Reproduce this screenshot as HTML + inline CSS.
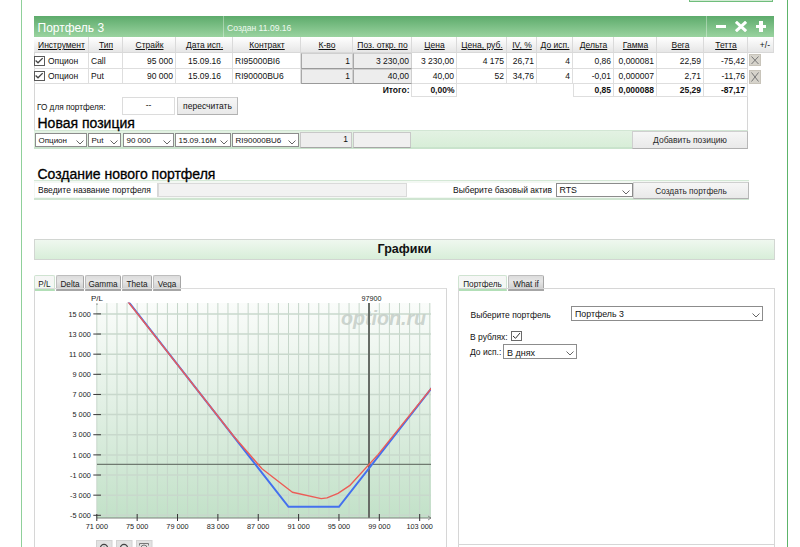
<!DOCTYPE html><html><head><meta charset="utf-8"><style>
*{box-sizing:border-box}
html,body{margin:0;padding:0;width:800px;height:547px;overflow:hidden;background:#fff;font-family:"Liberation Sans",sans-serif;color:#111}
.abs{position:absolute}
.t{position:absolute;white-space:pre;font-size:8.5px;line-height:15px}
.hd{background:linear-gradient(#ffffff,#e6e6e6)}
.u{text-decoration:underline}
.sel{position:absolute;background:#fff;border:1px solid #8c8c8c;font-size:8px;line-height:11px;padding-left:3px;white-space:pre}
.chev{position:absolute;right:3px;top:5px;width:8px;height:5px}
.btn{position:absolute;background:linear-gradient(#f6f6f6,#e9e9e9);border:1px solid #cfcfcf;border-bottom-color:#b0b0b0;border-right-color:#b8b8b8;font-size:9px;text-align:center;white-space:pre}
.tab{position:absolute;top:275px;height:16px;background:linear-gradient(#dcdcdc,#e6e6e6 40%,#cfcfcf);border:1px solid #bdbdbd;border-right-color:#a6a6a6;border-bottom:2px solid #a6a6a6;border-radius:2px 2px 0 0;font-size:8.2px;line-height:17.5px;text-align:center;color:#1a1a1a}
.tab.act{background:linear-gradient(#f6f6f6,#f2f8f2);border-color:#cfe3d1;border-bottom:2px solid #b2dfb7}
</style></head><body>

<div class="abs" style="left:21px;top:0;width:1px;height:547px;background:#8fd09a"></div>
<div class="abs" style="left:787px;top:0;width:1px;height:547px;background:#5db46a"></div>
<div class="abs" style="left:689px;top:-10px;width:84px;height:12px;border:1px solid #6fbd7b;background:#d3ebd5"></div>
<div class="abs" style="left:34px;top:16px;width:740px;height:21px;background:linear-gradient(#5dab6b,#9ad3a0)"></div>
<div class="abs" style="left:223px;top:16px;width:1px;height:21px;background:rgba(255,255,255,.35)"></div>
<div class="abs" style="left:706px;top:16px;width:1px;height:21px;background:rgba(255,255,255,.35)"></div>
<div class="t" style="left:37.5px;top:20px;font-size:12px;line-height:16px;color:#ffffff">Портфель 3</div>
<div class="t" style="left:227px;top:20.75px;font-size:8.6px;line-height:14px;color:#eefaf0">Создан 11.09.16</div>
<div class="abs" style="left:715.5px;top:24.5px;width:10.5px;height:3.5px;background:#fff"></div>
<svg class="abs" style="left:735px;top:21px" width="12" height="11"><path d="M2 1.8 L10 9.2 M10 1.8 L2 9.2" stroke="#fff" stroke-width="3" stroke-linecap="square"/></svg>
<div class="abs" style="left:755.5px;top:24.5px;width:10.5px;height:3.5px;background:#fff"></div>
<div class="abs" style="left:759px;top:21px;width:3.5px;height:10.5px;background:#fff"></div>
<div class="abs" style="left:34px;top:37px;width:714px;height:112px;border-left:1px solid #d6d6d6;border-right:1px solid #d6d6d6"></div>
<div class="abs hd" style="left:34px;top:37px;width:55px;height:16px;border-right:1px solid #dadada;border-bottom:1px solid #d8d8d8"></div>
<div class="t u" style="left:34px;top:38px;width:55px;text-align:center">Инструмент</div>
<div class="abs hd" style="left:89px;top:37px;width:34px;height:16px;border-right:1px solid #dadada;border-bottom:1px solid #d8d8d8"></div>
<div class="t u" style="left:89px;top:38px;width:34px;text-align:center">Тип</div>
<div class="abs hd" style="left:123px;top:37px;width:53px;height:16px;border-right:1px solid #dadada;border-bottom:1px solid #d8d8d8"></div>
<div class="t u" style="left:123px;top:38px;width:53px;text-align:center">Страйк</div>
<div class="abs hd" style="left:176px;top:37px;width:57px;height:16px;border-right:1px solid #dadada;border-bottom:1px solid #d8d8d8"></div>
<div class="t u" style="left:176px;top:38px;width:57px;text-align:center">Дата исп.</div>
<div class="abs hd" style="left:233px;top:37px;width:68px;height:16px;border-right:1px solid #dadada;border-bottom:1px solid #d8d8d8"></div>
<div class="t u" style="left:233px;top:38px;width:68px;text-align:center">Контракт</div>
<div class="abs hd" style="left:301px;top:37px;width:52px;height:16px;border-right:1px solid #dadada;border-bottom:1px solid #d8d8d8"></div>
<div class="t u" style="left:301px;top:38px;width:52px;text-align:center">К-во</div>
<div class="abs hd" style="left:353px;top:37px;width:59px;height:16px;border-right:1px solid #dadada;border-bottom:1px solid #d8d8d8"></div>
<div class="t u" style="left:353px;top:38px;width:59px;text-align:center">Поз. откр. по</div>
<div class="abs hd" style="left:412px;top:37px;width:45px;height:16px;border-right:1px solid #dadada;border-bottom:1px solid #d8d8d8"></div>
<div class="t u" style="left:412px;top:38px;width:45px;text-align:center">Цена</div>
<div class="abs hd" style="left:457px;top:37px;width:50px;height:16px;border-right:1px solid #dadada;border-bottom:1px solid #d8d8d8"></div>
<div class="t u" style="left:457px;top:38px;width:50px;text-align:center">Цена, руб.</div>
<div class="abs hd" style="left:507px;top:37px;width:30px;height:16px;border-right:1px solid #dadada;border-bottom:1px solid #d8d8d8"></div>
<div class="t u" style="left:507px;top:38px;width:30px;text-align:center">IV, %</div>
<div class="abs hd" style="left:537px;top:37px;width:36px;height:16px;border-right:1px solid #dadada;border-bottom:1px solid #d8d8d8"></div>
<div class="t u" style="left:537px;top:38px;width:36px;text-align:center">До исп.</div>
<div class="abs hd" style="left:573px;top:37px;width:41px;height:16px;border-right:1px solid #dadada;border-bottom:1px solid #d8d8d8"></div>
<div class="t u" style="left:573px;top:38px;width:41px;text-align:center">Дельта</div>
<div class="abs hd" style="left:614px;top:37px;width:43px;height:16px;border-right:1px solid #dadada;border-bottom:1px solid #d8d8d8"></div>
<div class="t u" style="left:614px;top:38px;width:43px;text-align:center">Гамма</div>
<div class="abs hd" style="left:657px;top:37px;width:47px;height:16px;border-right:1px solid #dadada;border-bottom:1px solid #d8d8d8"></div>
<div class="t u" style="left:657px;top:38px;width:47px;text-align:center">Вега</div>
<div class="abs hd" style="left:704px;top:37px;width:44px;height:16px;border-right:1px solid #dadada;border-bottom:1px solid #d8d8d8"></div>
<div class="t u" style="left:704px;top:38px;width:44px;text-align:center">Тетта</div>
<div class="abs hd" style="left:748px;top:37px;width:26px;height:16px;border-right:1px solid #dadada;border-bottom:1px solid #d8d8d8"></div>
<div class="t" style="left:748px;top:38px;width:22px;text-align:right">+/-</div>
<div class="abs" style="left:34px;top:53px;width:55px;height:16px;border-right:1px solid #dedede;border-bottom:1px solid #dedede"></div>
<div class="abs" style="left:34.3px;top:56px;width:10.3px;height:9.6px;border:1px solid #5a5a5a;background:#fff"></div>
<svg class="abs" style="left:34.3px;top:56px" width="11" height="10"><path d="M1.6 4.6 L4 6.8 L8.7 2.1" fill="none" stroke="#444" stroke-width="1.3"/></svg>
<div class="t" style="left:48px;top:54px">Опцион</div>
<div class="abs" style="left:89px;top:53px;width:34px;height:16px;border-right:1px solid #dedede;border-bottom:1px solid #dedede"></div>
<div class="t" style="left:91px;top:54px">Call</div>
<div class="abs" style="left:123px;top:53px;width:53px;height:16px;border-right:1px solid #dedede;border-bottom:1px solid #dedede"></div>
<div class="t" style="left:123px;top:54px;width:50px;text-align:right">95 000</div>
<div class="abs" style="left:176px;top:53px;width:57px;height:16px;border-right:1px solid #dedede;border-bottom:1px solid #dedede"></div>
<div class="t" style="left:176px;top:54px;width:57px;text-align:center">15.09.16</div>
<div class="abs" style="left:233px;top:53px;width:68px;height:16px;border-right:1px solid #dedede;border-bottom:1px solid #dedede"></div>
<div class="t" style="left:235px;top:54px">RI95000BI6</div>
<div class="abs" style="left:301px;top:53px;width:52px;height:16px;background:#ededed;border:1px solid #cfcfcf;border-bottom-color:#9a9a9a;border-left-color:#a8a8a8"></div>
<div class="t" style="left:301px;top:54px;width:49px;text-align:right">1</div>
<div class="abs" style="left:353px;top:53px;width:59px;height:16px;background:#ededed;border:1px solid #cfcfcf;border-bottom-color:#9a9a9a;border-left-color:#a8a8a8"></div>
<div class="t" style="left:353px;top:54px;width:56px;text-align:right">3 230,00</div>
<div class="abs" style="left:412px;top:53px;width:45px;height:16px;border-right:1px solid #dedede;border-bottom:1px solid #dedede"></div>
<div class="t" style="left:412px;top:54px;width:42px;text-align:right">3 230,00</div>
<div class="abs" style="left:457px;top:53px;width:50px;height:16px;border-right:1px solid #dedede;border-bottom:1px solid #dedede"></div>
<div class="t" style="left:457px;top:54px;width:47px;text-align:right">4 175</div>
<div class="abs" style="left:507px;top:53px;width:30px;height:16px;border-right:1px solid #dedede;border-bottom:1px solid #dedede"></div>
<div class="t" style="left:507px;top:54px;width:27px;text-align:right">26,71</div>
<div class="abs" style="left:537px;top:53px;width:36px;height:16px;border-right:1px solid #dedede;border-bottom:1px solid #dedede"></div>
<div class="t" style="left:537px;top:54px;width:33px;text-align:right">4</div>
<div class="abs" style="left:573px;top:53px;width:41px;height:16px;border-right:1px solid #dedede;border-bottom:1px solid #dedede"></div>
<div class="t" style="left:573px;top:54px;width:38px;text-align:right">0,86</div>
<div class="abs" style="left:614px;top:53px;width:43px;height:16px;border-right:1px solid #dedede;border-bottom:1px solid #dedede"></div>
<div class="t" style="left:614px;top:54px;width:40px;text-align:right">0,000081</div>
<div class="abs" style="left:657px;top:53px;width:47px;height:16px;border-right:1px solid #dedede;border-bottom:1px solid #dedede"></div>
<div class="t" style="left:657px;top:54px;width:44px;text-align:right">22,59</div>
<div class="abs" style="left:704px;top:53px;width:44px;height:16px;border-right:1px solid #dedede;border-bottom:1px solid #dedede"></div>
<div class="t" style="left:704px;top:54px;width:41px;text-align:right">-75,42</div>
<div class="abs" style="left:748.5px;top:53.5px;width:12px;height:12.5px;background:#d6d3cb;border:1px solid #c8c4ba"></div>
<svg class="abs" style="left:748.5px;top:53.5px" width="12" height="12.5"><path d="M2.5 2.5 L9.5 10.0 M9.5 2.5 L2.5 10.0" stroke="#777" stroke-width="1"/></svg>
<div class="abs" style="left:34px;top:69px;width:55px;height:15px;border-right:1px solid #dedede;border-bottom:1px solid #dedede"></div>
<div class="abs" style="left:34.3px;top:71px;width:10.3px;height:9.6px;border:1px solid #5a5a5a;background:#fff"></div>
<svg class="abs" style="left:34.3px;top:71px" width="11" height="10"><path d="M1.6 4.6 L4 6.8 L8.7 2.1" fill="none" stroke="#444" stroke-width="1.3"/></svg>
<div class="t" style="left:48px;top:69px">Опцион</div>
<div class="abs" style="left:89px;top:69px;width:34px;height:15px;border-right:1px solid #dedede;border-bottom:1px solid #dedede"></div>
<div class="t" style="left:91px;top:69px">Put</div>
<div class="abs" style="left:123px;top:69px;width:53px;height:15px;border-right:1px solid #dedede;border-bottom:1px solid #dedede"></div>
<div class="t" style="left:123px;top:69px;width:50px;text-align:right">90 000</div>
<div class="abs" style="left:176px;top:69px;width:57px;height:15px;border-right:1px solid #dedede;border-bottom:1px solid #dedede"></div>
<div class="t" style="left:176px;top:69px;width:57px;text-align:center">15.09.16</div>
<div class="abs" style="left:233px;top:69px;width:68px;height:15px;border-right:1px solid #dedede;border-bottom:1px solid #dedede"></div>
<div class="t" style="left:235px;top:69px">RI90000BU6</div>
<div class="abs" style="left:301px;top:69px;width:52px;height:15px;background:#ededed;border:1px solid #cfcfcf;border-bottom-color:#9a9a9a;border-left-color:#a8a8a8"></div>
<div class="t" style="left:301px;top:69px;width:49px;text-align:right">1</div>
<div class="abs" style="left:353px;top:69px;width:59px;height:15px;background:#ededed;border:1px solid #cfcfcf;border-bottom-color:#9a9a9a;border-left-color:#a8a8a8"></div>
<div class="t" style="left:353px;top:69px;width:56px;text-align:right">40,00</div>
<div class="abs" style="left:412px;top:69px;width:45px;height:15px;border-right:1px solid #dedede;border-bottom:1px solid #dedede"></div>
<div class="t" style="left:412px;top:69px;width:42px;text-align:right">40,00</div>
<div class="abs" style="left:457px;top:69px;width:50px;height:15px;border-right:1px solid #dedede;border-bottom:1px solid #dedede"></div>
<div class="t" style="left:457px;top:69px;width:47px;text-align:right">52</div>
<div class="abs" style="left:507px;top:69px;width:30px;height:15px;border-right:1px solid #dedede;border-bottom:1px solid #dedede"></div>
<div class="t" style="left:507px;top:69px;width:27px;text-align:right">34,76</div>
<div class="abs" style="left:537px;top:69px;width:36px;height:15px;border-right:1px solid #dedede;border-bottom:1px solid #dedede"></div>
<div class="t" style="left:537px;top:69px;width:33px;text-align:right">4</div>
<div class="abs" style="left:573px;top:69px;width:41px;height:15px;border-right:1px solid #dedede;border-bottom:1px solid #dedede"></div>
<div class="t" style="left:573px;top:69px;width:38px;text-align:right">-0,01</div>
<div class="abs" style="left:614px;top:69px;width:43px;height:15px;border-right:1px solid #dedede;border-bottom:1px solid #dedede"></div>
<div class="t" style="left:614px;top:69px;width:40px;text-align:right">0,000007</div>
<div class="abs" style="left:657px;top:69px;width:47px;height:15px;border-right:1px solid #dedede;border-bottom:1px solid #dedede"></div>
<div class="t" style="left:657px;top:69px;width:44px;text-align:right">2,71</div>
<div class="abs" style="left:704px;top:69px;width:44px;height:15px;border-right:1px solid #dedede;border-bottom:1px solid #dedede"></div>
<div class="t" style="left:704px;top:69px;width:41px;text-align:right">-11,76</div>
<div class="abs" style="left:748.5px;top:69.5px;width:12px;height:14px;background:#d6d3cb;border:1px solid #c8c4ba"></div>
<svg class="abs" style="left:748.5px;top:69.5px" width="12" height="14"><path d="M2.5 2.5 L9.5 11.5 M9.5 2.5 L2.5 11.5" stroke="#777" stroke-width="1"/></svg>
<div class="t" style="left:353px;top:82.5px;width:56.5px;text-align:right;font-weight:bold">Итого:</div>
<div class="abs" style="left:411px;top:84px;width:46px;height:13px;border:1px solid #dedede;border-top:none"></div>
<div class="t" style="left:412px;top:82.5px;width:42.5px;text-align:right;font-weight:bold">0,00%</div>
<div class="abs" style="left:573px;top:84px;width:41px;height:13px;border-right:1px solid #dedede;border-bottom:1px solid #dedede;border-left:1px solid #dedede;"></div>
<div class="t" style="left:573px;top:82.5px;width:38px;text-align:right;font-weight:bold">0,85</div>
<div class="abs" style="left:614px;top:84px;width:43px;height:13px;border-right:1px solid #dedede;border-bottom:1px solid #dedede;"></div>
<div class="t" style="left:614px;top:82.5px;width:40px;text-align:right;font-weight:bold">0,000088</div>
<div class="abs" style="left:657px;top:84px;width:47px;height:13px;border-right:1px solid #dedede;border-bottom:1px solid #dedede;"></div>
<div class="t" style="left:657px;top:82.5px;width:44px;text-align:right;font-weight:bold">25,29</div>
<div class="abs" style="left:704px;top:84px;width:44px;height:13px;border-right:1px solid #dedede;border-bottom:1px solid #dedede;"></div>
<div class="t" style="left:704px;top:82.5px;width:41px;text-align:right;font-weight:bold">-87,17</div>
<div class="t" style="left:37px;top:99.5px;font-size:8.2px;line-height:15px">ГО для портфеля:</div>
<div class="abs" style="left:122px;top:97px;width:53px;height:18px;border:1px solid #dcdcdc;background:#fff"></div>
<div class="t" style="left:122px;top:98px;width:53px;text-align:center;line-height:15px">--</div>
<div class="btn" style="left:177px;top:97px;width:61px;height:18px;line-height:17px;font-size:8.5px">пересчитать</div>
<div class="t" style="left:37.5px;top:113.5px;font-size:14px;line-height:18px;color:#000;-webkit-text-stroke:0.3px #000;z-index:2">Новая позиция</div>
<div class="abs" style="left:34px;top:130px;width:714px;height:19px;background:linear-gradient(#e3f2e3,#d8eed8);border-top:1px solid #d2e6d4;border-bottom:2px solid #c9e3cc"></div>
<div class="sel" style="left:35px;top:133px;width:52px;height:14px;line-height:13.5px;padding-left:2.5px">Опцион<svg class="chev" width="8" height="5" style="right:2px;top:5.5px"><path d="M0.5 0.5 L4 4 L7.5 0.5" fill="none" stroke="#666" stroke-width="1"/></svg></div>
<div class="sel" style="left:88px;top:133px;width:33px;height:14px;line-height:13.5px;padding-left:2.5px">Put<svg class="chev" width="8" height="5" style="right:2px;top:5.5px"><path d="M0.5 0.5 L4 4 L7.5 0.5" fill="none" stroke="#666" stroke-width="1"/></svg></div>
<div class="sel" style="left:123px;top:133px;width:51px;height:14px;line-height:13.5px;padding-left:2.5px">90 000<svg class="chev" width="8" height="5" style="right:2px;top:5.5px"><path d="M0.5 0.5 L4 4 L7.5 0.5" fill="none" stroke="#666" stroke-width="1"/></svg></div>
<div class="sel" style="left:175px;top:133px;width:56px;height:14px;line-height:13.5px;padding-left:2.5px">15.09.16M<svg class="chev" width="8" height="5" style="right:2px;top:5.5px"><path d="M0.5 0.5 L4 4 L7.5 0.5" fill="none" stroke="#666" stroke-width="1"/></svg></div>
<div class="sel" style="left:232px;top:133px;width:67px;height:14px;line-height:13.5px;padding-left:2.5px">RI90000BU6<svg class="chev" width="8" height="5" style="right:2px;top:5.5px"><path d="M0.5 0.5 L4 4 L7.5 0.5" fill="none" stroke="#666" stroke-width="1"/></svg></div>
<div class="abs" style="left:300px;top:132px;width:52px;height:16px;background:#eeeeee;border:1px solid #c8c8c8;border-bottom-color:#a6a6a6"></div>
<div class="t" style="left:300px;top:132px;width:48px;text-align:right">1</div>
<div class="abs" style="left:353px;top:132px;width:58px;height:16px;background:#f0f0f0;border:1px solid #c8c8c8;border-bottom-color:#a6a6a6"></div>
<div class="btn" style="left:632px;top:131px;width:116px;height:18px;line-height:17px;font-size:8.5px;color:#2a2a2a">Добавить позицию</div>
<div class="t" style="left:37.5px;top:164.5px;font-size:14px;line-height:18px;color:#000;-webkit-text-stroke:0.3px #000;z-index:2">Создание нового портфеля</div>
<div class="abs" style="left:34px;top:180px;width:715px;height:20px;background:#f3f8f3;border-top:1px solid #d4e8d6;border-bottom:2px solid #cfe5d1"></div>
<div class="abs" style="left:35px;top:183px;width:123px;height:14px;background:#fff;border-right:1px solid #d8d8d8"></div>
<div class="t" style="left:38px;top:182px;font-size:8.5px;line-height:16px">Введите название портфеля</div>
<div class="abs" style="left:158px;top:183px;width:249px;height:14px;background:#f2f2f2;border:1px solid #dadada"></div>
<div class="abs" style="left:407px;top:183px;width:149px;height:14px;background:#fff"></div>
<div class="t" style="left:407px;top:182px;width:145px;text-align:right;font-size:8.5px;line-height:16px">Выберите базовый актив</div>
<div class="sel" style="left:556px;top:183px;width:77px;height:14px;line-height:13.5px;padding-left:2.5px;font-size:8.8px">RTS<svg class="chev" width="8" height="5" style="right:2px;top:5.5px"><path d="M0.5 0.5 L4 4 L7.5 0.5" fill="none" stroke="#666" stroke-width="1"/></svg></div>
<div class="btn" style="left:633px;top:182px;width:116px;height:17px;line-height:16px;font-size:8.3px;color:#2a2a2a">Создать портфель</div>
<div class="abs" style="left:34px;top:238.5px;width:741px;height:21px;background:linear-gradient(#eff8ef,#d8eed9);border:1px solid #d2d6d2"></div>
<div class="t" style="left:34px;top:240px;width:741px;text-align:center;font-size:12.5px;line-height:18px;font-weight:bold;color:#111">Графики</div>
<div class="tab act" style="left:34px;width:21px">P/L</div>
<div class="tab" style="left:56px;width:28px">Delta</div>
<div class="tab" style="left:85px;width:36px">Gamma</div>
<div class="tab" style="left:122px;width:30px">Theta</div>
<div class="tab" style="left:153px;width:28px">Vega</div>
<div class="abs" style="left:34px;top:288px;width:413px;height:260px;border-left:1px solid #d6d6d6;border-right:1px solid #d6d6d6;border-top:1px solid #dcdcdc"></div>
<div class="tab act" style="left:458px;width:49px">Портфель</div>
<div class="tab" style="left:508px;width:36px">What if</div>
<div class="abs" style="left:458px;top:288px;width:317px;height:280px;border:1px solid #d6d6d6"></div>
<div class="abs" style="left:458px;top:544px;width:317px;height:1px;background:#d6d6d6"></div>
<div class="t" style="left:470.5px;top:307.5px;font-size:8.5px">Выберите портфель</div>
<div class="sel" style="left:571px;top:306px;width:192px;height:15px;line-height:15px;font-size:8.8px">Портфель 3<svg class="chev" width="8" height="5" style="top:5.5px;right:2.5px"><path d="M0.5 0.5 L4 4 L7.5 0.5" fill="none" stroke="#666" stroke-width="1"/></svg></div>
<div class="t" style="left:470px;top:330px;font-size:8.5px">В рублях:</div>
<div class="abs" style="left:511px;top:331px;width:11px;height:10px;border:1px solid #6a6a6a;background:#fff"></div>
<svg class="abs" style="left:511px;top:331px" width="11" height="10"><path d="M2 5 L4.5 7.3 L9 2" fill="none" stroke="#333" stroke-width="1"/></svg>
<div class="t" style="left:470px;top:345px;font-size:8.5px">До исп.:</div>
<div class="sel" style="left:503px;top:344px;width:74px;height:15px;line-height:16px;font-size:9px">В днях<svg class="chev" width="8" height="5" style="top:5.5px;right:2.5px"><path d="M0.5 0.5 L4 4 L7.5 0.5" fill="none" stroke="#666" stroke-width="1"/></svg></div>
<svg class="abs" style="left:0;top:0" width="800" height="547">
<defs><linearGradient id="pg" x1="0" y1="0" x2="0" y2="1"><stop offset="0" stop-color="#fafcfa"/><stop offset="0.5" stop-color="#e0efe3"/><stop offset="1" stop-color="#c2e1c8"/></linearGradient><clipPath id="cp"><rect x="97" y="302.5" width="334" height="215.5"/></clipPath></defs>
<rect x="97" y="303" width="334" height="215" fill="url(#pg)"/>
<line x1="96.80" y1="303" x2="96.80" y2="518" stroke="#c6d6ca" stroke-width="1"/>
<line x1="106.89" y1="303" x2="106.89" y2="518" stroke="#c6d6ca" stroke-width="1"/>
<line x1="116.98" y1="303" x2="116.98" y2="518" stroke="#c6d6ca" stroke-width="1"/>
<line x1="127.07" y1="303" x2="127.07" y2="518" stroke="#c6d6ca" stroke-width="1"/>
<line x1="137.16" y1="303" x2="137.16" y2="518" stroke="#c6d6ca" stroke-width="1"/>
<line x1="147.25" y1="303" x2="147.25" y2="518" stroke="#c6d6ca" stroke-width="1"/>
<line x1="157.34" y1="303" x2="157.34" y2="518" stroke="#c6d6ca" stroke-width="1"/>
<line x1="167.43" y1="303" x2="167.43" y2="518" stroke="#c6d6ca" stroke-width="1"/>
<line x1="177.52" y1="303" x2="177.52" y2="518" stroke="#c6d6ca" stroke-width="1"/>
<line x1="187.61" y1="303" x2="187.61" y2="518" stroke="#c6d6ca" stroke-width="1"/>
<line x1="197.70" y1="303" x2="197.70" y2="518" stroke="#c6d6ca" stroke-width="1"/>
<line x1="207.79" y1="303" x2="207.79" y2="518" stroke="#c6d6ca" stroke-width="1"/>
<line x1="217.88" y1="303" x2="217.88" y2="518" stroke="#c6d6ca" stroke-width="1"/>
<line x1="227.97" y1="303" x2="227.97" y2="518" stroke="#c6d6ca" stroke-width="1"/>
<line x1="238.06" y1="303" x2="238.06" y2="518" stroke="#c6d6ca" stroke-width="1"/>
<line x1="248.15" y1="303" x2="248.15" y2="518" stroke="#c6d6ca" stroke-width="1"/>
<line x1="258.24" y1="303" x2="258.24" y2="518" stroke="#c6d6ca" stroke-width="1"/>
<line x1="268.33" y1="303" x2="268.33" y2="518" stroke="#c6d6ca" stroke-width="1"/>
<line x1="278.42" y1="303" x2="278.42" y2="518" stroke="#c6d6ca" stroke-width="1"/>
<line x1="288.51" y1="303" x2="288.51" y2="518" stroke="#c6d6ca" stroke-width="1"/>
<line x1="298.60" y1="303" x2="298.60" y2="518" stroke="#c6d6ca" stroke-width="1"/>
<line x1="308.69" y1="303" x2="308.69" y2="518" stroke="#c6d6ca" stroke-width="1"/>
<line x1="318.78" y1="303" x2="318.78" y2="518" stroke="#c6d6ca" stroke-width="1"/>
<line x1="328.87" y1="303" x2="328.87" y2="518" stroke="#c6d6ca" stroke-width="1"/>
<line x1="338.96" y1="303" x2="338.96" y2="518" stroke="#c6d6ca" stroke-width="1"/>
<line x1="349.05" y1="303" x2="349.05" y2="518" stroke="#c6d6ca" stroke-width="1"/>
<line x1="359.14" y1="303" x2="359.14" y2="518" stroke="#c6d6ca" stroke-width="1"/>
<line x1="369.23" y1="303" x2="369.23" y2="518" stroke="#c6d6ca" stroke-width="1"/>
<line x1="379.32" y1="303" x2="379.32" y2="518" stroke="#c6d6ca" stroke-width="1"/>
<line x1="389.41" y1="303" x2="389.41" y2="518" stroke="#c6d6ca" stroke-width="1"/>
<line x1="399.50" y1="303" x2="399.50" y2="518" stroke="#c6d6ca" stroke-width="1"/>
<line x1="409.59" y1="303" x2="409.59" y2="518" stroke="#c6d6ca" stroke-width="1"/>
<line x1="419.68" y1="303" x2="419.68" y2="518" stroke="#c6d6ca" stroke-width="1"/>
<line x1="429.77" y1="303" x2="429.77" y2="518" stroke="#c6d6ca" stroke-width="1"/>
<line x1="97" y1="313.90" x2="431" y2="313.90" stroke="#c8d8cc" stroke-width="1.5"/>
<line x1="97" y1="334.04" x2="431" y2="334.04" stroke="#c8d8cc" stroke-width="1.5"/>
<line x1="97" y1="354.18" x2="431" y2="354.18" stroke="#c8d8cc" stroke-width="1.5"/>
<line x1="97" y1="374.32" x2="431" y2="374.32" stroke="#c8d8cc" stroke-width="1.5"/>
<line x1="97" y1="394.46" x2="431" y2="394.46" stroke="#c8d8cc" stroke-width="1.5"/>
<line x1="97" y1="414.60" x2="431" y2="414.60" stroke="#c8d8cc" stroke-width="1.5"/>
<line x1="97" y1="434.74" x2="431" y2="434.74" stroke="#c8d8cc" stroke-width="1.5"/>
<line x1="97" y1="454.88" x2="431" y2="454.88" stroke="#c8d8cc" stroke-width="1.5"/>
<line x1="97" y1="475.02" x2="431" y2="475.02" stroke="#c8d8cc" stroke-width="1.5"/>
<line x1="97" y1="495.16" x2="431" y2="495.16" stroke="#c8d8cc" stroke-width="1.5"/>
<line x1="97" y1="515.30" x2="431" y2="515.30" stroke="#c8d8cc" stroke-width="1.5"/>
<text x="341" y="324.8" font-size="20" font-weight="bold" font-style="italic" fill="#c6cfc9" fill-opacity="0.9" font-family="Liberation Sans" textLength="85" lengthAdjust="spacingAndGlyphs">option.ru</text>
<line x1="97" y1="464.3" x2="431" y2="464.3" stroke="#6f7a70" stroke-width="1.2"/>
<line x1="369" y1="303" x2="369" y2="518" stroke="#666c66" stroke-width="2"/>
<line x1="97" y1="518" x2="431" y2="518" stroke="#7a807a" stroke-width="1"/>
<path d="M428 516 L431 518 L428 520" fill="none" stroke="#777" stroke-width="0.8"/>
<line x1="97" y1="303.5" x2="97" y2="305" stroke="#888" stroke-width="1"/>
<line x1="93.3" y1="313.90" x2="101" y2="313.90" stroke="#3a3a3a" stroke-width="1"/>
<text x="90.8" y="316.60" font-size="7.3" text-anchor="end" fill="#222" font-family="Liberation Sans">15 000</text>
<line x1="93.3" y1="334.04" x2="101" y2="334.04" stroke="#3a3a3a" stroke-width="1"/>
<text x="90.8" y="336.74" font-size="7.3" text-anchor="end" fill="#222" font-family="Liberation Sans">13 000</text>
<line x1="93.3" y1="354.18" x2="101" y2="354.18" stroke="#3a3a3a" stroke-width="1"/>
<text x="90.8" y="356.88" font-size="7.3" text-anchor="end" fill="#222" font-family="Liberation Sans">11 000</text>
<line x1="93.3" y1="374.32" x2="101" y2="374.32" stroke="#3a3a3a" stroke-width="1"/>
<text x="90.8" y="377.02" font-size="7.3" text-anchor="end" fill="#222" font-family="Liberation Sans">9 000</text>
<line x1="93.3" y1="394.46" x2="101" y2="394.46" stroke="#3a3a3a" stroke-width="1"/>
<text x="90.8" y="397.16" font-size="7.3" text-anchor="end" fill="#222" font-family="Liberation Sans">7 000</text>
<line x1="93.3" y1="414.60" x2="101" y2="414.60" stroke="#3a3a3a" stroke-width="1"/>
<text x="90.8" y="417.30" font-size="7.3" text-anchor="end" fill="#222" font-family="Liberation Sans">5 000</text>
<line x1="93.3" y1="434.74" x2="101" y2="434.74" stroke="#3a3a3a" stroke-width="1"/>
<text x="90.8" y="437.44" font-size="7.3" text-anchor="end" fill="#222" font-family="Liberation Sans">3 000</text>
<line x1="93.3" y1="454.88" x2="101" y2="454.88" stroke="#3a3a3a" stroke-width="1"/>
<text x="90.8" y="457.58" font-size="7.3" text-anchor="end" fill="#222" font-family="Liberation Sans">1 000</text>
<line x1="93.3" y1="475.02" x2="101" y2="475.02" stroke="#3a3a3a" stroke-width="1"/>
<text x="90.8" y="477.72" font-size="7.3" text-anchor="end" fill="#222" font-family="Liberation Sans">-1 000</text>
<line x1="93.3" y1="495.16" x2="101" y2="495.16" stroke="#3a3a3a" stroke-width="1"/>
<text x="90.8" y="497.86" font-size="7.3" text-anchor="end" fill="#222" font-family="Liberation Sans">-3 000</text>
<line x1="93.3" y1="515.30" x2="101" y2="515.30" stroke="#3a3a3a" stroke-width="1"/>
<text x="90.8" y="518.00" font-size="7.3" text-anchor="end" fill="#222" font-family="Liberation Sans">-5 000</text>
<line x1="96.80" y1="514" x2="96.80" y2="521" stroke="#333" stroke-width="1"/>
<text x="96.80" y="528.5" font-size="7.3" text-anchor="middle" fill="#222" font-family="Liberation Sans">71 000</text>
<line x1="137.16" y1="514" x2="137.16" y2="521" stroke="#333" stroke-width="1"/>
<text x="137.16" y="528.5" font-size="7.3" text-anchor="middle" fill="#222" font-family="Liberation Sans">75 000</text>
<line x1="177.52" y1="514" x2="177.52" y2="521" stroke="#333" stroke-width="1"/>
<text x="177.52" y="528.5" font-size="7.3" text-anchor="middle" fill="#222" font-family="Liberation Sans">79 000</text>
<line x1="217.88" y1="514" x2="217.88" y2="521" stroke="#333" stroke-width="1"/>
<text x="217.88" y="528.5" font-size="7.3" text-anchor="middle" fill="#222" font-family="Liberation Sans">83 000</text>
<line x1="258.24" y1="514" x2="258.24" y2="521" stroke="#333" stroke-width="1"/>
<text x="258.24" y="528.5" font-size="7.3" text-anchor="middle" fill="#222" font-family="Liberation Sans">87 000</text>
<line x1="298.60" y1="514" x2="298.60" y2="521" stroke="#333" stroke-width="1"/>
<text x="298.60" y="528.5" font-size="7.3" text-anchor="middle" fill="#222" font-family="Liberation Sans">91 000</text>
<line x1="338.96" y1="514" x2="338.96" y2="521" stroke="#333" stroke-width="1"/>
<text x="338.96" y="528.5" font-size="7.3" text-anchor="middle" fill="#222" font-family="Liberation Sans">95 000</text>
<line x1="379.32" y1="514" x2="379.32" y2="521" stroke="#333" stroke-width="1"/>
<text x="379.32" y="528.5" font-size="7.3" text-anchor="middle" fill="#222" font-family="Liberation Sans">99 000</text>
<line x1="419.68" y1="514" x2="419.68" y2="521" stroke="#333" stroke-width="1"/>
<text x="419.68" y="528.5" font-size="7.3" text-anchor="middle" fill="#222" font-family="Liberation Sans">103 000</text>
<text x="97" y="301" font-size="8" text-anchor="middle" fill="#222" font-family="Liberation Sans">P/L</text>
<text x="371.5" y="300.7" font-size="7.2" text-anchor="middle" fill="#222" font-family="Liberation Sans">97900</text>
<path d="M-14.19 118.99 L288.51 506.77 L338.96 506.77 L490.31 312.88" fill="none" stroke="#4470ee" stroke-width="2" clip-path="url(#cp)"/>
<path d="M106.29 274.10 L233.50 436.00 L262.00 468.80 L292.40 492.20 L321.20 498.60 L327.00 497.90 L338.00 493.30 L349.60 485.70 L378.00 454.60 L450.35 364.58" fill="none" stroke="#ec5c56" stroke-width="1.4" stroke-linejoin="round" clip-path="url(#cp)"/>
<rect x="96.5" y="540.5" width="15.5" height="12" fill="#e2e2e2" stroke="#d2d2d2"/>
<rect x="116.5" y="540.5" width="15.5" height="12" fill="#e2e2e2" stroke="#d2d2d2"/>
<rect x="136.5" y="540.5" width="15.5" height="12" fill="#e2e2e2" stroke="#d2d2d2"/>
<circle cx="104" cy="548" r="3.6" fill="none" stroke="#444" stroke-width="1.2"/><line x1="102.5" y1="548" x2="105.5" y2="548" stroke="#444" stroke-width="0.8"/><line x1="104" y1="546.5" x2="104" y2="549.5" stroke="#444" stroke-width="0.8"/>
<circle cx="124" cy="548" r="3.6" fill="none" stroke="#444" stroke-width="1.2"/>
<path d="M139.5 545.5 V543.5 H148.5 V545.5" fill="none" stroke="#777" stroke-width="1"/><circle cx="144" cy="548" r="3" fill="none" stroke="#777" stroke-width="1"/>
</svg>
</body></html>
